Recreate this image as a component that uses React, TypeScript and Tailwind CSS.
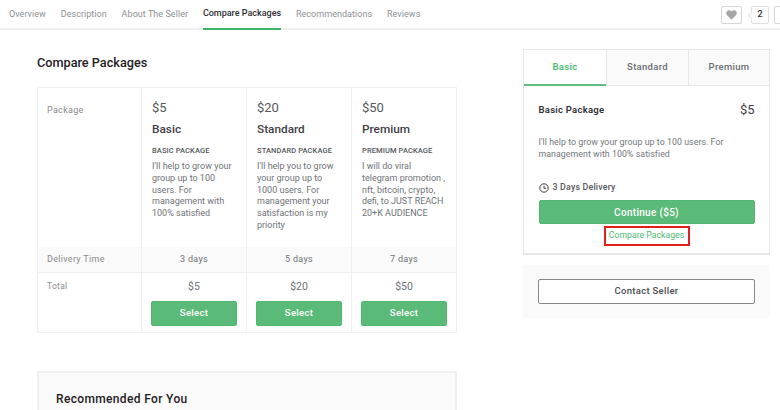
import React from "react";

const tabs = ["Overview", "Description", "About The Seller", "Compare Packages", "Recommendations", "Reviews"];

const packages = [
  {
    price: "$5",
    name: "Basic",
    title: "BASIC PACKAGE",
    lines: ["I'll help to grow your", "group up to 100", "users. For", "management with", "100% satisfied"],
    days: "3 days",
  },
  {
    price: "$20",
    name: "Standard",
    title: "STANDARD PACKAGE",
    lines: ["I'll help you to grow", "your group up to", "1000 users. For", "management your", "satisfaction is my", "priority"],
    days: "5 days",
  },
  {
    price: "$50",
    name: "Premium",
    title: "PREMIUM PACKAGE",
    lines: ["I will do viral", "telegram promotion ,", "nft, bitcoin, crypto,", "defi, to JUST REACH", "20+K AUDIENCE"],
    days: "7 days",
  },
];

const CompareTable = () => {
  return (
    <div className="border border-[#f0f0f0] grid grid-cols-[103px_105px_105px_105px]">
      {/* package row */}
      <div className="h-[159px] pl-[9px] pt-[16px] text-[9px] leading-[12px] tracking-[0.3px] text-[#8a8a8a]">Package</div>
      {packages.map((p) => (
        <div key={p.name} className="h-[159px] border-l border-[#f0f0f0] pl-[10px] pt-[12px]">
          <p className="text-[13px] leading-[16px] text-[#55585c]">{p.price}</p>
          <p className="mt-[5px] text-[11.8px] leading-[16px] font-medium text-[#3f4145]">{p.name}</p>
          <p className="mt-[8px] text-[7.5px] leading-[12px] font-medium tracking-[0.1px] text-[#55585c]">{p.title}</p>
          <div className="mt-[4px] text-[9px] leading-[11.8px] text-[#6f7276]">
            {p.lines.map((line) => (
              <p key={line}>{line}</p>
            ))}
          </div>
        </div>
      ))}

      {/* delivery row */}
      <div className="h-[26px] bg-[#fafafa] border-b border-[#f0f0f0] pl-[9px] flex items-center text-[9px] tracking-[0.3px] text-[#8a8a8a]">Delivery Time</div>
      {packages.map((p) => (
        <div key={p.name} className="h-[26px] bg-[#fafafa] border-b border-l border-[#f0f0f0] flex items-center justify-center text-[9px] tracking-[0.3px] text-[#6f7276]">
          {p.days}
        </div>
      ))}

      {/* total row */}
      <div className="h-[59px] pl-[9px] pt-[7px] text-[8.5px] leading-[12px] tracking-[0.3px] text-[#8a8a8a]">Total</div>
      {packages.map((p) => (
        <div key={p.name} className="h-[59px] border-l border-[#f0f0f0] flex flex-col items-center pt-[7px]">
          <p className="text-[10.5px] leading-[14px] text-[#6f7276]">{p.price}</p>
          <button className="mt-[7px] w-[86px] h-[25px] rounded-[2px] bg-[#5aba78] border border-[#52b871] text-white text-[9.5px] font-medium tracking-[0.3px]">
            Select
          </button>
        </div>
      ))}
    </div>
  );
};

const OrderBox = () => {
  return (
    <div className="border border-[#e6e6e6] border-b-2">
      <div className="flex h-[36px] border-b border-[#e6e6e6]">
        <div className="w-[82px] -mb-px border-b-2 border-[#5fbd80] flex items-center justify-center text-[9.5px] font-semibold tracking-[0.3px] text-[#4dbb72]">Basic</div>
        <div className="w-[82px] bg-[#fafafa] border-l border-[#e6e6e6] flex items-center justify-center text-[9.5px] font-medium tracking-[0.3px] text-[#6a6d70]">Standard</div>
        <div className="flex-1 bg-[#fafafa] border-l border-[#e6e6e6] flex items-center justify-center text-[9.5px] font-medium tracking-[0.3px] text-[#6a6d70]">Premium</div>
      </div>
      <div className="px-[14.5px] pt-[16px] pb-[7px]">
        <div className="flex justify-between items-center h-[16px]">
          <p className="text-[9.5px] font-semibold tracking-[0.25px] text-[#2f3033]">Basic Package</p>
          <p className="text-[13px] text-[#3f4145]">$5</p>
        </div>
        <p className="mt-[19px] text-[8.8px] leading-[11.5px] tracking-[0.05px] text-[#74777b]">
          I'll help to grow your group up to 100 users. For<br />management with 100% satisfied
        </p>
        <div className="mt-[22px] flex items-center gap-[4px] h-[12px]">
          <svg width="10" height="10" viewBox="0 0 10 10" fill="none" stroke="#3f4145" strokeWidth="1">
            <circle cx="5" cy="5" r="4.2" />
            <path d="M5 2.6V5.3H7.2" />
          </svg>
          <p className="text-[8.8px] font-medium tracking-[0.2px] text-[#55585c]">3 Days Delivery</p>
        </div>
        <button className="mt-[6px] block w-full h-[24px] rounded-[2px] bg-[#5aba78] border border-[#52b871] text-white text-[10px] font-medium tracking-[0.3px]">
          Continue ($5)
        </button>
        <div className="mt-[2px] flex justify-center">
          <span className="w-[86px] h-[20px] border-2 border-[#e0201c] flex items-center justify-center text-[8.7px] text-[#4dbb72]">Compare Packages</span>
        </div>
      </div>
    </div>
  );
};

export default function App() {
  return (
    <div className="w-[780px] h-[410px] overflow-hidden bg-white font-['Roboto',sans-serif]">
      <div className="h-[30px] border-b-2 border-[#eeeeee] flex justify-between">
        <div className="flex pl-[9px] gap-[14.8px]">
          {tabs.map((tab) => (
            <div
              key={tab}
              className={
                tab === "Compare Packages"
                  ? "h-[30px] border-b-2 border-[#3fb265] flex items-center text-[9px] font-medium text-[#2f3033]"
                  : "h-[28px] pt-[2px] flex items-center text-[9px] tracking-[0.05px] text-[#8d9094]"
              }
            >
              {tab}
            </div>
          ))}
        </div>
        <div className="flex items-start pt-[6px] -mr-[10px]">
          <div className="w-[21px] h-[18px] border border-[#d6d6d6] rounded-[2px] flex items-center justify-center">
            <svg width="11" height="10" viewBox="0 0 24 22" fill="#a6a6a6">
              <path d="M12 21.5 2.3 11.6C-.4 8.8-.3 4.6 2.3 2.2 5 -.3 9.300 0 12 3.400 14.700 0 19 -.3 21.700 2.200 24.300 4.600 24.400 8.800 21.700 11.600Z" />
            </svg>
          </div>
          <div className="relative ml-[9px] w-[18px] h-[18px] border border-[#e0e0e0] rounded-[2px] flex items-center justify-center text-[9px] font-medium text-[#2f3033]">
            2
            <span className="absolute -left-[3px] top-[6px] w-[5px] h-[5px] rotate-45 bg-white border-l border-b border-[#e0e0e0]" />
          </div>
          <div className="ml-[5px] w-[16px] h-[18px] border border-[#d6d6d6] rounded-[2px]" />
        </div>
      </div>

      <div className="flex pl-[37px]">
        <div className="w-[420px] shrink-0">
          <h2 className="mt-[24px] text-[12.7px] leading-[18px] font-medium text-[#1f2023]">Compare Packages</h2>
          <div className="mt-[15px]">
            <CompareTable />
          </div>
          <div className="mt-[38px] h-[60px] bg-[#fafafa] border-2 border-[#f0f0f0] pl-[17px] pt-[18px]">
            <p className="text-[12px] leading-[16px] font-medium tracking-[0.35px] text-[#1f2023]">Recommended For You</p>
          </div>
        </div>

        <div className="ml-[66px] w-[247px] shrink-0 pt-[19px]">
          <OrderBox />
          <div className="mt-[10px] h-[53px] bg-[#fafafa] px-[15px] pt-[14px]">
            <button className="block w-full h-[25px] rounded-[2px] bg-white border border-[#85878a] text-[9.5px] font-medium tracking-[0.3px] text-[#4a4c50]">
              Contact Seller
            </button>
          </div>
        </div>
      </div>
    </div>
  );
}
